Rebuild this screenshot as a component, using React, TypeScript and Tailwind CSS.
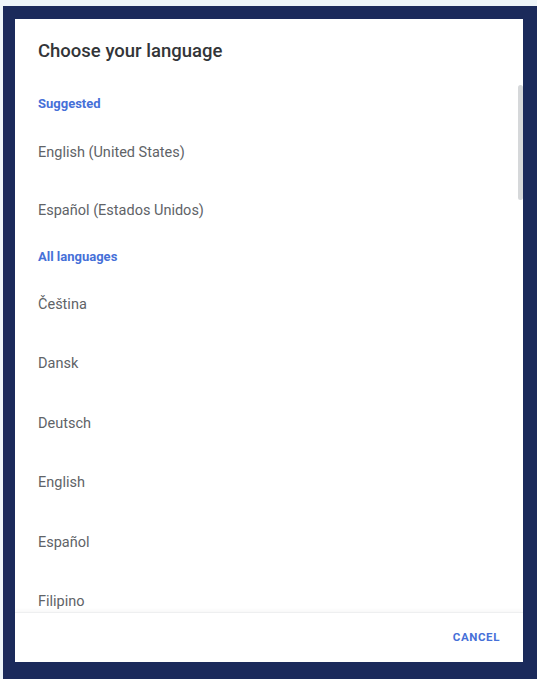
const suggested = ['English (United States)', 'Español (Estados Unidos)'];
const allLanguages = ['Čeština', 'Dansk', 'Deutsch', 'English', 'Español', 'Filipino'];

function SectionLabel({ label, height }: { label: string; height: string }) {
  return (
    <div className={`flex ${height} items-center px-[23px] text-[13px] font-bold text-[#4670d8]`}>
      {label}
    </div>
  );
}

export default function App() {
  return (
    <div
      className="flex h-[679px] w-[537px] flex-col bg-[#eef5f9] pl-[3px] pt-[6px]"
      style={{ fontFamily: 'Roboto, "Liberation Sans", sans-serif' }}
    >
      <div className="flex flex-1 flex-col bg-[#1b2a5b] pb-[17px] pl-[12px] pr-[14px] pt-[13px]">
        <div className="flex flex-1 flex-col bg-white">
          {/* Header */}
          <div className="flex h-[66px] items-center px-[23px]">
            <h1 className="text-[18.5px] font-medium text-[#333538]">Choose your language</h1>
          </div>

          {/* List */}
          <div className="relative h-[527px] overflow-hidden">
            <div className="absolute right-0 top-0 h-[115px] w-[5px] rounded-sm bg-[#d6d8da]" />
            <SectionLabel label="Suggested" height="h-[38px]" />
            <div className="flex h-[60px] items-center px-[23px] text-[14.5px] text-[#606367]">
              {suggested[0]}
            </div>
            <div className="flex h-[56px] items-center px-[23px] text-[14.5px] text-[#606367]">
              {suggested[1]}
            </div>
            <SectionLabel label="All languages" height="h-[36px]" />
            {allLanguages.map((lang) => (
              <div key={lang} className="flex h-[59.5px] items-center px-[23px] text-[14.5px] text-[#606367]">
                {lang}
              </div>
            ))}
          </div>

          {/* Footer */}
          <div className="flex flex-1 items-center justify-end border-t border-[#eeeff0] px-[23px] shadow-[0_-2px_4px_rgba(0,0,0,0.03)]">
            <button className="text-[11.5px] font-bold tracking-[0.6px] text-[#4670d8]">CANCEL</button>
          </div>
        </div>
      </div>
    </div>
  );
}
